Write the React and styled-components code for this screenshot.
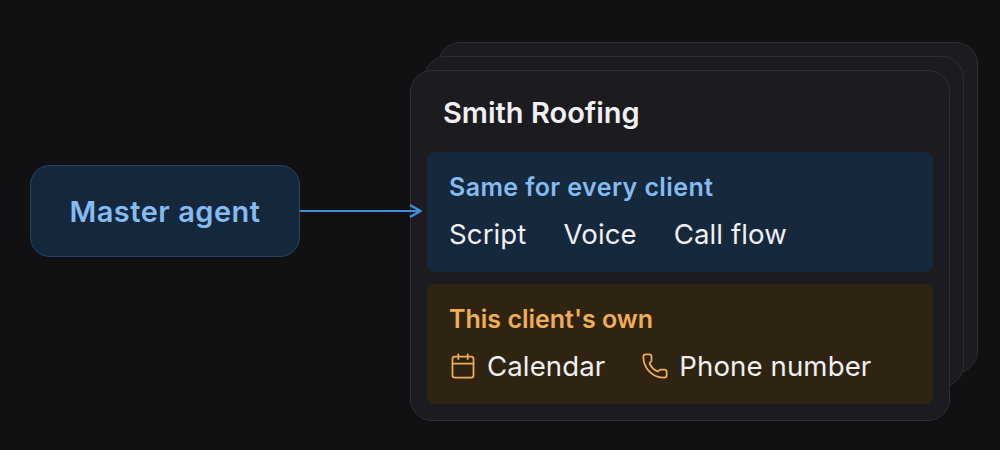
import styled, { createGlobalStyle } from "styled-components";
import { Calendar, Phone } from "lucide-react";

const GlobalStyle = createGlobalStyle`
  html, body {
    margin: 0;
    padding: 0;
    background: #111113;
    font-family: "Inter", "Liberation Sans", sans-serif;
  }
`;

const Stage = styled.div`
  width: 1000px;
  height: 450px;
  box-sizing: border-box;
  padding: 70px 0 0 30px;
  display: flex;
  align-items: flex-start;
  overflow: hidden;
`;

const Source = styled.div`
  display: flex;
  align-items: center;
  margin-top: 95px;
  position: relative;
  z-index: 2;
  margin-right: -12px;
`;

const MasterBox = styled.div`
  width: 270px;
  height: 92px;
  box-sizing: border-box;
  display: flex;
  align-items: center;
  justify-content: center;
  background: #15273a;
  border: 1px solid #264666;
  border-radius: 20px;
  color: #85bbf3;
  font-size: 29px;
  font-weight: 600;
  letter-spacing: 0.5px;
`;

const Arrow = styled.svg`
  display: block;
  width: 122px;
  height: 16px;
`;

const CardStack = styled.div`
  position: relative;
  width: 540px;
  height: 351px;
`;

const BackCard = styled.div`
  position: absolute;
  width: 540px;
  height: 331px;
  box-sizing: border-box;
  left: ${(p) => p.$x}px;
  top: ${(p) => p.$y}px;
  background: #1c1c20;
  border: 1px solid #2e2e33;
  border-radius: 22px;
`;

const Card = styled.div`
  position: relative;
  width: 540px;
  height: 351px;
  box-sizing: border-box;
  padding: 0 16px;
  background: #1c1c20;
  border: 1px solid #2e2e33;
  border-radius: 22px;
  display: flex;
  flex-direction: column;
`;

const CardTitle = styled.div`
  height: 81px;
  padding: 2px 0 0 16px;
  box-sizing: border-box;
  display: flex;
  align-items: center;
  color: #f0f0f2;
  font-size: 29px;
  font-weight: 600;
`;

const Panel = styled.div`
  height: 120px;
  box-sizing: border-box;
  padding: 20px 22px 0;
  margin-bottom: 12px;
  border-radius: 8px;
  background: ${(p) => (p.$tone === "amber" ? "#2f2412" : "#15283c")};
`;

const PanelTitle = styled.div`
  font-size: 25px;
  line-height: 30px;
  font-weight: 600;
  letter-spacing: ${(p) => (p.$tone === "amber" ? "0" : "0.4px")};
  color: ${(p) => (p.$tone === "amber" ? "#f0ad59" : "#85bbf3")};
`;

const Items = styled.div`
  display: flex;
  align-items: center;
  gap: ${(p) => p.$gap}px;
  margin-top: 16px;
`;

const Item = styled.div`
  display: flex;
  align-items: center;
  gap: 10px;
  color: #f0f0f2;
  font-size: 27.6px;
  line-height: 32px;
  letter-spacing: 0.1px;

  svg {
    color: #f0ad59;
    flex: none;
  }
`;

export default function App() {
  return (
    <>
      <GlobalStyle />
      <Stage>
        <Source>
          <MasterBox>Master agent</MasterBox>
          <Arrow viewBox="0 0 122 16" fill="none">
            <path d="M0 8H120" stroke="#3f8fe0" strokeWidth="2.2" />
            <path d="M110 2L120.5 8L110 14" stroke="#3f8fe0" strokeWidth="2.4" />
          </Arrow>
        </Source>
        <CardStack>
          <BackCard $x={28} $y={-28} />
          <BackCard $x={14} $y={-14} />
          <Card>
            <CardTitle>Smith Roofing</CardTitle>
            <Panel>
              <PanelTitle>Same for every client</PanelTitle>
              <Items $gap={37}>
                <Item>Script</Item>
                <Item>Voice</Item>
                <Item>Call flow</Item>
              </Items>
            </Panel>
            <Panel $tone="amber">
              <PanelTitle $tone="amber">This client's own</PanelTitle>
              <Items $gap={36}>
                <Item>
                  <Calendar size={28} strokeWidth={1.5} />
                  Calendar
                </Item>
                <Item>
                  <Phone size={28} strokeWidth={1.5} />
                  Phone number
                </Item>
              </Items>
            </Panel>
          </Card>
        </CardStack>
      </Stage>
    </>
  );
}
